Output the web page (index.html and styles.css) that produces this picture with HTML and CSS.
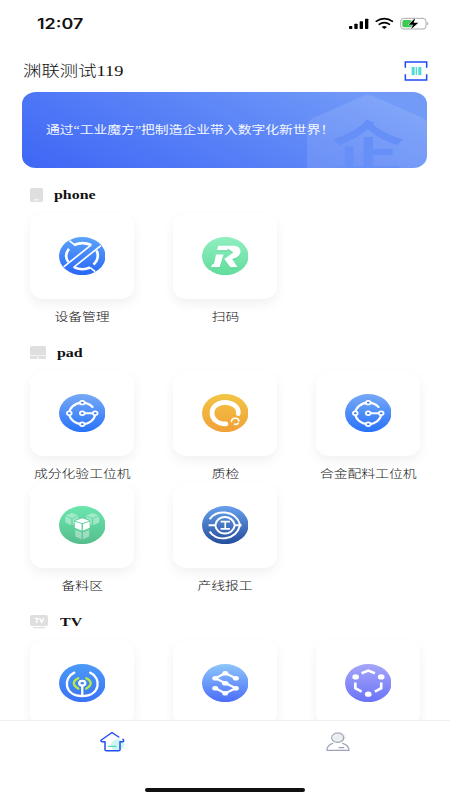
FILE: index.html
```html
<!DOCTYPE html>
<html lang="zh-CN">
<head>
<meta charset="utf-8">
<title>渊联测试119</title>
<link rel="stylesheet" href="styles.css">
</head>
<body>
<div class="app">
  <div class="status">
    <span class="clock">12:07</span>
    <svg class="status-icons" viewBox="0 0 240 48" width="80" height="16">
      <g fill="#000"><rect x="0" y="27" width="10" height="9" rx="2"/><rect x="16" y="20" width="10" height="16" rx="2"/><rect x="32" y="13" width="10" height="23" rx="2"/><rect x="48" y="5" width="10" height="31" rx="2"/></g>
      <g fill="none" stroke="#000" stroke-width="5"><path d="M80 14Q106 -4 132 14"/><path d="M89 23Q106 11 123 23"/></g>
      <path d="M98 30Q106 24 114 30L106 36Z"/>
      <rect x="155" y="4" width="76" height="32" rx="9" fill="#fff" stroke="#999" stroke-width="2.5"/>
      <rect x="160" y="9" width="29" height="22" rx="5" fill="#3cc954"/>
      <path d="M235 15q6 5 0 10z" fill="#999"/>
      <path d="M199 2L179 23H192L186 37L208 17H194Z" fill="#000" stroke="#fff" stroke-width="3" paint-order="stroke"/>
    </svg>
  </div>
  <header class="header">
    <h1 class="title">渊联测试119</h1>
    <svg class="scan" viewBox="0 0 72 60" width="24" height="20">
      <path d="M4 20V3H68V20M4 40V57H68V40" fill="none" stroke="#1a4cf5" stroke-width="4.5"/>
      <path d="M23 18H32V42H23ZM35 18H39V42H35ZM43 18H52V42H43Z" fill="#4bdcd2"/>
    </svg>
  </header>
  <main class="content">
    <div class="banner">
      <svg class="hexagon" viewBox="0 0 120 75" width="120" height="75"><path d="M0 75V33Q0 28 6 25L54 4Q61 0 68 4L116 25Q120 27 120 31V75Z" fill="#fff" fill-opacity=".1"/></svg>
      <span class="watermark">企</span>
      <p class="slogan">通过“工业魔方”把制造企业带入数字化新世界！</p>
    </div>

    <section class="section">
      <h2 class="heading">
        <svg viewBox="0 0 39 42" width="13" height="14"><rect width="39" height="42" rx="5" fill="#dfdfdf"/><rect x="13" y="34" width="13" height="3" fill="#fff"/></svg>
        <span class="name name-phone">phone</span>
      </h2>
      <div class="grid">
        <div class="item">
          <div class="card">
            <svg class="icon" viewBox="0 0 140 115">
              <defs><linearGradient id="blue" x2="0" y2="1"><stop stop-color="#5ba4fa"/><stop offset="1" stop-color="#2866f8"/></linearGradient></defs>
              <ellipse cx="70" cy="57.500" rx="70" ry="57.500" fill="url(#blue)"/>
              <g fill="none" stroke="#fff"><path d="M45 24Q70 13 97 24M30 36Q14 56 28 75M113 40Q124 62 104 83M47 92Q70 102 94 92" stroke-width="8"/><path d="M31 11L47 24M94 92L109 104M14 90L97 24M43 92L126 26" stroke-width="5"/></g>
            </svg>
          </div>
          <span class="label">设备管理</span>
        </div>
        <div class="item">
          <div class="card">
            <svg class="icon" viewBox="0 0 140 115">
              <defs><linearGradient id="mint" x2="0" y2="1"><stop stop-color="#90efc0"/><stop offset="1" stop-color="#61dc9c"/></linearGradient></defs>
              <ellipse cx="70" cy="57.500" rx="70" ry="57.500" fill="url(#mint)"/>
              <path d="M49 26H96Q118 28 116 47Q112 63 91 66L107 91H85L67 66L94 47L77 35V40H45ZM42 53H65L53 91H27L31 82H36Z" fill="#39b77b" transform="translate(0 3)" opacity=".5"/>
              <path d="M49 26H96Q118 28 116 47Q112 63 91 66L107 91H85L67 66L94 47L77 35V40H45ZM42 53H65L53 91H27L31 82H36Z" fill="#fff"/>
            </svg>
          </div>
          <span class="label">扫码</span>
        </div>
      </div>
    </section>

    <section class="section">
      <h2 class="heading">
        <svg viewBox="0 0 48 40" width="16" height="13.300"><rect width="48" height="40" rx="5" fill="#dfdfdf"/><path d="M0 29H48" stroke="#fff" stroke-width="2"/><circle cx="24" cy="35" r="2.500" fill="#fff"/></svg>
        <span class="name name-pad">pad</span>
      </h2>
      <div class="grid">
        <div class="item">
          <div class="card">
            <svg class="icon" viewBox="0 0 140 115">
              <defs>
                <linearGradient id="sky" x2="0" y2="1"><stop stop-color="#76a9f5"/><stop offset="1" stop-color="#2872fa"/></linearGradient>
                <g id="orbit"><ellipse cx="70" cy="57.500" rx="70" ry="57.500" fill="url(#sky)"/><path d="M101 39Q88 26 70 26C46 27 31 42 31 58C31 75 47 90 70 91C94 90 109 75 109 58H70" fill="none" stroke="#fff" stroke-width="6.500" stroke-linecap="round"/><g fill="#377df7" stroke="#fff" stroke-width="5.500"><ellipse cx="70" cy="26" rx="7" ry="5.500"/><ellipse cx="31" cy="58" rx="7" ry="5.500"/><ellipse cx="70" cy="58" rx="7" ry="5.500"/><ellipse cx="109" cy="58" rx="7" ry="5.500"/><ellipse cx="70" cy="91" rx="7" ry="5.500"/></g></g>
              </defs>
              <use href="#orbit"/>
            </svg>
          </div>
          <span class="label">成分化验工位机</span>
        </div>
        <div class="item">
          <div class="card">
            <svg class="icon" viewBox="0 0 140 115">
              <defs><linearGradient id="gold" x2="0" y2="1"><stop stop-color="#f2c544"/><stop offset="1" stop-color="#f1a037"/></linearGradient></defs>
              <ellipse cx="70" cy="57.500" rx="70" ry="57.500" fill="url(#gold)"/>
              <g fill="none" stroke="#fff" stroke-linecap="round"><path d="M109 59C112 38 91 25 69 25C47 25 30 39 30 57C30 76 46 90 72 90" stroke-width="14"/><path d="M89 83C89 70 110 70 111 81M98 91Q105 93 109 88" stroke-width="5"/></g>
            </svg>
          </div>
          <span class="label">质检</span>
        </div>
        <div class="item">
          <div class="card"><svg class="icon" viewBox="0 0 140 115"><use href="#orbit"/></svg></div>
          <span class="label">合金配料工位机</span>
        </div>
        <div class="item">
          <div class="card">
            <svg class="icon" viewBox="0 0 140 115">
              <defs>
                <linearGradient id="green" x2="0" y2="1"><stop stop-color="#6ae7ae"/><stop offset="1" stop-color="#55bd8c"/></linearGradient>
                <g id="cube"><path d="M0-20L20-12L0-4L-20-12Z"/><path d="M-21-10L-2-2V19L-21 10Z"/><path d="M21-10L2-2V19L21 10Z"/></g>
              </defs>
              <ellipse cx="70" cy="57.500" rx="70" ry="57.500" fill="url(#green)"/>
              <g fill="#fff"><g opacity=".4"><use href="#cube" transform="translate(39 40) scale(.950)"/><use href="#cube" transform="translate(101 40) scale(.950)"/><use href="#cube" transform="translate(70 82)"/></g><path d="M70 32L94 43V67L70 79L46 67V43Z" fill="#5dd39c"/><use href="#cube" transform="translate(70 56) scale(1.060 .950)"/></g>
            </svg>
          </div>
          <span class="label">备料区</span>
        </div>
        <div class="item">
          <div class="card">
            <svg class="icon" viewBox="0 0 140 115">
              <defs><linearGradient id="navy" x2="0" y2="1"><stop stop-color="#679fed"/><stop offset="1" stop-color="#244e9c"/></linearGradient></defs>
              <ellipse cx="70" cy="57.500" rx="70" ry="57.500" fill="url(#navy)"/>
              <g fill="none" stroke="#fff" stroke-width="6"><path d="M23 40C40 10 101 10 115 57C101 107 40 107 23 77"/><path d="M20 58H40C44 25 93 25 99 58C93 91 44 91 40 58M99 58H119"/><path d="M56 47H84M70 47V69M56 69H84" stroke-width="5"/></g>
            </svg>
          </div>
          <span class="label">产线报工</span>
        </div>
      </div>
    </section>

    <section class="section">
      <h2 class="heading">
        <svg viewBox="0 0 54 42" width="18" height="14"><rect width="54" height="33" rx="6" fill="#dfdfdf"/><path d="M10 38H44" stroke="#dfdfdf" stroke-width="4" stroke-linecap="round"/><path d="M14 11H27M20.500 11V24M29 10L35 22L41 10" fill="none" stroke="#fff" stroke-width="4"/></svg>
        <span class="name name-tv">TV</span>
      </h2>
      <div class="grid">
        <div class="item">
          <div class="card">
            <svg class="icon" viewBox="0 0 140 115">
              <defs><linearGradient id="signal" x2="0" y2="1"><stop stop-color="#4b9af7"/><stop offset="1" stop-color="#3b72f6"/></linearGradient></defs>
              <ellipse cx="70" cy="57.500" rx="70" ry="57.500" fill="url(#signal)"/>
              <g fill="none" stroke="#fff" stroke-width="7" stroke-linecap="round"><path d="M46 26C11 42 15 96 70 97C125 96 129 42 94 26"/><path d="M58 43Q31 57 58 74M82 43Q109 57 82 74" stroke="#b7ed42"/><ellipse cx="70" cy="58" rx="9" ry="7"/><path d="M70 67V95"/></g>
            </svg>
          </div>
        </div>
        <div class="item">
          <div class="card">
            <svg class="icon" viewBox="0 0 140 115">
              <defs><linearGradient id="link" x2="0" y2="1"><stop stop-color="#8dc6fa"/><stop offset="1" stop-color="#4b6dfa"/></linearGradient></defs>
              <ellipse cx="70" cy="57.500" rx="70" ry="57.500" fill="url(#link)"/>
              <path d="M102 43L70 28L40 43L102 73L70 88L40 73" fill="none" stroke="#fff" stroke-width="7" stroke-linejoin="round"/>
              <path d="M40 43H102M40 73H102" stroke="none"/>
              <g fill="#fff"><ellipse cx="70" cy="28" rx="9" ry="7"/><ellipse cx="40" cy="43" rx="9" ry="7"/><ellipse cx="102" cy="43" rx="9" ry="7"/><ellipse cx="70" cy="58" rx="10" ry="7"/><ellipse cx="40" cy="73" rx="9" ry="7"/><ellipse cx="102" cy="73" rx="9" ry="7"/><ellipse cx="70" cy="88" rx="9" ry="7"/></g>
            </svg>
          </div>
        </div>
        <div class="item">
          <div class="card">
            <svg class="icon" viewBox="0 0 140 115">
              <defs><linearGradient id="violet" x2="0" y2="1"><stop stop-color="#a6a6f8"/><stop offset="1" stop-color="#6a73f8"/></linearGradient></defs>
              <ellipse cx="70" cy="57.500" rx="70" ry="57.500" fill="url(#violet)"/>
              <g fill="#fff"><ellipse cx="32" cy="39" rx="10" ry="8"/><ellipse cx="109" cy="39" rx="10" ry="8"/><ellipse cx="70" cy="91" rx="10" ry="8"/></g>
              <path d="M50 28L70 20L90 28M31 56V73L50 83M109 56V73L90 83" fill="none" stroke="#fff" stroke-width="8"/>
            </svg>
          </div>
        </div>
      </div>
    </section>
  </main>
  <nav class="tabs">
    <div class="tab">
      <svg viewBox="0 0 75 60" width="25" height="20">
        <ellipse cx="53" cy="39" rx="20" ry="17" fill="#cdf6ee"/>
        <path d="M56 15L38 3Q36 2 34 3L4 24Q1 27 6 29H15V53Q15 56 19 56H56Q60 56 60 53V29H69Q73 27 69 22" fill="none" stroke="#1f50f2" stroke-width="4.500" stroke-linecap="round" stroke-linejoin="round"/>
        <path d="M26 43H48" stroke="#53d8c4" stroke-width="3.500" stroke-linecap="round"/>
      </svg>
    </div>
    <div class="tab">
      <svg viewBox="0 0 72 60" width="24" height="20">
        <ellipse cx="40" cy="16" rx="19" ry="15" fill="#eceeef"/>
        <g fill="none" stroke="#9ca3b6" stroke-width="3.500" stroke-linecap="round"><ellipse cx="35" cy="17" rx="18" ry="14"/><path d="M20 34Q3 40 3 55H69Q68 39 50 34M39 47H53"/></g>
      </svg>
    </div>
    <div class="home-bar"></div>
  </nav>
</div>
</body>
</html>
```
FILE: styles.css
```css
* { box-sizing: border-box; }
body { margin: 0; background: #fff; }
.app {
  width: 450px;
  height: 800px;
  display: flex;
  flex-direction: column;
  overflow: hidden;
  background: #fff;
  color: #111;
  font-family: "Liberation Serif", "Noto Sans CJK SC", serif;
}
.status {
  height: 46px;
  flex: none;
  display: flex;
  align-items: center;
  justify-content: space-between;
  padding: 1px 21px 0 37px;
}
.clock {
  font: 600 14px/20px Inter, sans-serif;
  transform: scaleX(1.28);
  transform-origin: left;
}
.status-icons { margin-top: 2px; }
.header {
  height: 46px;
  flex: none;
  display: flex;
  align-items: center;
  justify-content: space-between;
  padding: 3px 22px 0 22.500px;
}
.title {
  margin: 0;
  font-size: 15.200px;
  font-weight: 300;
  line-height: 22px;
  transform: scaleX(1.21);
  transform-origin: left;
}
.content { flex: 1; min-height: 0; overflow: hidden; }
.banner {
  position: relative;
  height: 75.5px;
  margin: 0 23px 0 22px;
  border-radius: 14px / 12px;
  overflow: hidden;
  display: flex;
  align-items: center;
  padding-left: 23.500px;
  background: linear-gradient(25deg, #4069f6 5%, #5a83f7 50%, #729bf8 90%);
}
.hexagon { position: absolute; right: 0; bottom: 0; }
.watermark {
  position: absolute;
  right: 31.500px;
  top: 22px;
  font: 700 56px/60px "Noto Sans CJK SC", sans-serif;
  color: #668ff8;
  transform: scaleX(1.3);
}
.slogan {
  margin: 0;
  position: relative;
  color: #f4f7ff;
  font-size: 11.500px;
  line-height: 18px;
  white-space: nowrap;
  transform: scaleX(1.2);
  transform-origin: left;
}
.section { padding: 0 30px; }
.heading {
  margin: 0;
  height: 45.500px;
  padding: 10px 0 0;
  display: flex;
  align-items: center;
}
.name {
  font-size: 13.300px;
  font-weight: 700;
  line-height: 18px;
  transform: scaleX(1.2);
  transform-origin: left;
}
.name-phone { margin-left: 11px; }
.name-pad { margin-left: 11px; }
.name-tv { margin-left: 12px; }
.grid {
  display: grid;
  grid-template-columns: repeat(3, 104px);
  justify-content: space-between;
}
.item { display: flex; flex-direction: column; align-items: center; height: 112px; }
.card {
  width: 104px;
  height: 85.500px;
  flex: none;
  border-radius: 14px / 12px;
  background: #fff;
  box-shadow: 0 5px 12px rgba(0, 0, 0, .06);
  display: flex;
  align-items: center;
  justify-content: center;
}
.icon { width: 46.500px; height: 38.200px; }
.label {
  margin-top: 9px;
  font-size: 11.500px;
  font-weight: 300;
  line-height: 18px;
  color: #111;
  white-space: nowrap;
  transform: scaleX(1.2);
}
.tabs {
  position: relative;
  height: 80px;
  flex: none;
  display: flex;
  border-top: 1px solid #f0f0f0;
  background: #fff;
}
.tab { flex: 1; display: flex; justify-content: center; padding-top: 11px; }
.home-bar {
  position: absolute;
  left: 145px;
  bottom: 8px;
  width: 160px;
  height: 4px;
  border-radius: 2px;
  background: #111;
}
```
